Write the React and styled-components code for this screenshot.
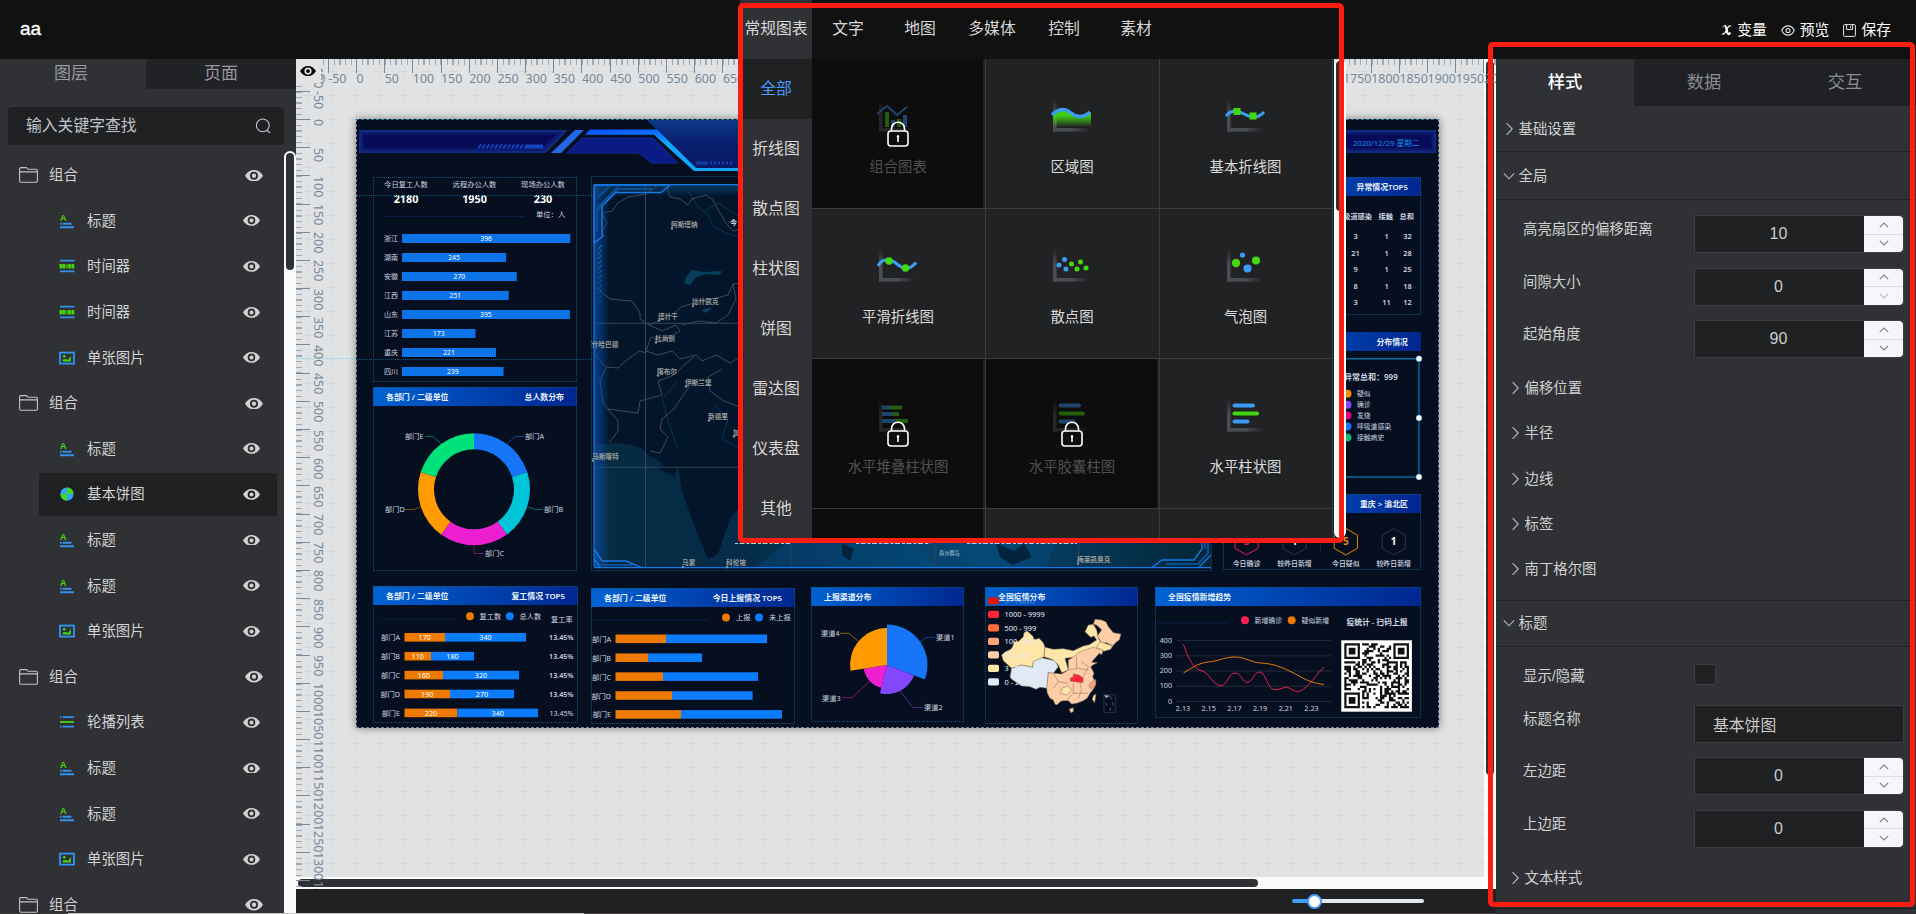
import React from "react";
import styled, { createGlobalStyle, css } from "styled-components";

const Global = createGlobalStyle`
  * { box-sizing: border-box; }
  body {
    margin: 0;
    background: #303134;
    font-family: "Liberation Sans", "Noto Sans CJK SC", sans-serif;
    color: #d0d1d3;
    overflow: hidden;
  }
`;

/* ---------- shell ---------- */
const Page = styled.div`
  position: relative;
  width: 1916px;
  height: 914px;
  display: flex;
  flex-direction: column;
  overflow: hidden;
`;
const Header = styled.header`
  flex: 0 0 59px;
  background: #111;
  display: flex;
  justify-content: space-between;
  padding: 0 25px 0 20px;
`;
const ProjectName = styled.div`
  font-size: 19px;
  font-weight: 500;
  color: #fff;
  line-height: 58px;
  -webkit-text-stroke: 0.35px #fff;
`;
const Actions = styled.div`
  display: flex;
  align-items: center;
  gap: 14px;
  padding-top: 1px;
`;
const Action = styled.div`
  display: flex;
  align-items: center;
  gap: 5px;
  color: #fff;
  font-size: 14.8px;
  line-height: 20px;
`;
const Body = styled.div`
  flex: 1;
  display: flex;
  min-height: 0;
`;

/* ---------- left panel ---------- */
const LeftPanel = styled.aside`
  flex: 0 0 296px;
  background: #303134;
  display: flex;
  flex-direction: column;
`;
const LayerTabs = styled.div`
  display: flex;
  flex: 0 0 30px;
`;
const LayerTab = styled.div`
  flex: 0 0 ${(p) => p.$w}px;
  background: ${(p) => (p.$active ? "#303134" : "#212226")};
  color: #96989d;
  font-size: 17px;
  line-height: 30px;
  text-align: center;
  padding-right: ${(p) => (p.$active ? 4 : 0)}px;
`;
const Search = styled.div`
  flex: 0 0 38px;
  margin: 18px 12px 6px 8px;
  padding: 0 13px 0 18px;
  border-radius: 4px;
  background: #202122;
  color: #c0c4cc;
  font-size: 15.8px;
  line-height: 36px;
  display: flex;
  justify-content: space-between;
  align-items: center;
`;
const ListArea = styled.div`
  flex: 1;
  min-height: 0;
  display: flex;
  overflow: hidden;
`;
const LayerList = styled.div`
  flex: 0 0 284px;
  padding-top: 2.8px;
`;
const LayerRow = styled.div`
  height: 43px;
  margin: ${(p) => (p.$group ? "0 7px 2.6px 13px" : "0 7px 2.6px 39px")};
  padding: ${(p) => (p.$group ? "0 14px 0 6px" : "0 17px 0 20px")};
  background: ${(p) => (p.$selected ? "#202123" : "transparent")};
  display: flex;
  align-items: center;
`;
const LayerIcon = styled.span`
  display: flex;
  width: ${(p) => (p.$group ? 30 : 28)}px;
`;
const LayerName = styled.span`
  flex: 1;
  font-size: 14.4px;
  line-height: 20px;
  color: #d3d3d3;
`;
const VScroll = styled.div`
  flex: 0 0 12px;
  background: #fafafa;
  border-radius: ${(p) => (p.$round ? "6px" : "6px 6px 0 0")};
  padding: 2px;
`;
const VThumb = styled.div`
  height: ${(p) => p.$h}px;
  border-radius: 4px;
  background: #303134;
`;

/* ---------- stage ---------- */
const Center = styled.main`
  flex: 0 0 1200px;
  display: flex;
  flex-direction: column;
`;
const Stage = styled.div`
  position: relative;
  flex: 0 0 830px;
  display: flex;
  flex-direction: column;
  background: #fff;
  overflow: hidden;
`;
const StageTop = styled.div`
  flex: 0 0 818px;
  display: flex;
`;
const Canvas = styled.div`
  position: relative;
  flex: 0 0 1188px;
  overflow: hidden;
  background-color: #e1e2e4;
  background-image: url("data:image/svg+xml,%3Csvg xmlns='http://www.w3.org/2000/svg' width='24' height='24'%3E%3Cpath d='M7 12.5H17M12.5 7.5V17' stroke='%23d6d7da'/%3E%3C/svg%3E");
  background-size: 24px 24px;
`;
const HScroll = styled.div`
  flex: 0 0 12px;
  width: 1188px;
  background: #fafafa;
  border-radius: 6px;
  padding: 2px;
`;
const HThumb = styled.div`
  width: 960px;
  height: 8px;
  border-radius: 4px;
  background: #303134;
`;
const RulerX = styled.div`
  position: absolute;
  left: 3.6px;
  top: 0;
  height: 30px;
  display: flex;
`;
const RulerY = styled.div`
  position: absolute;
  left: 0;
  top: 3.6px;
  width: 30px;
  display: flex;
  flex-direction: column;
`;
const tick = "#778a9b";
const minor = "#9eaab6";
const CellX = styled.div`
  flex: 0 0 28.2px;
  min-width: 0;
  height: 30px;
  padding: 12px 0 0 0.5px;
  font: 12.4px/16px "Noto Sans", sans-serif;
  color: #778898;
  white-space: nowrap;
  background:
    linear-gradient(${tick}, ${tick}) 0 0 / 1.2px 14px no-repeat,
    repeating-linear-gradient(90deg, ${minor} 0 1.5px, transparent 1.5px 5.64px) 0 0 / 100% 6px no-repeat;
`;
const CellY = styled.div`
  flex: 0 0 28.2px;
  min-height: 0;
  width: 30px;
  display: flex;
  align-items: flex-start;
  padding: 0.5px 0 0 14px;
  font: 12.4px/16px "Noto Sans", sans-serif;
  color: #778898;
  white-space: nowrap;
  background:
    linear-gradient(${tick}, ${tick}) 0 0 / 14px 1.2px no-repeat,
    repeating-linear-gradient(180deg, ${minor} 0 1.5px, transparent 1.5px 5.64px) 0 0 / 6px 100% no-repeat;
  span { writing-mode: vertical-rl; }
`;
const RulerCorner = styled.div`
  position: absolute;
  left: 0;
  top: 0;
  width: 25px;
  height: 24px;
  background: #e3e3e4;
  display: flex;
  align-items: center;
  justify-content: center;
  padding-right: 1px;
`;
const Guide = styled.div`
  position: absolute;
  left: ${(p) => p.$x}px;
  top: ${(p) => p.$y}px;
  width: ${(p) => p.$w}px;
  border-top: 1px dotted ${(p) => p.$c || "#0f5677"};
`;
const BottomBar = styled.div`
  flex: 0 0 24px;
  background: #202122;
  display: flex;
  justify-content: flex-end;
  align-items: center;
  padding-right: 72px;
`;
const SliderTrack = styled.div`
  width: 132px;
  height: 4px;
  border-radius: 2px;
  background: linear-gradient(90deg, #409eff 22px, #e4e7ed 22px);
  display: flex;
  align-items: center;
  padding-left: 15px;
`;
const SliderKnob = styled.div`
  width: 15px;
  height: 15px;
  border-radius: 50%;
  background: #fff;
  border: 2px solid #409eff;
`;
const StatusLine = styled.div`
  position: absolute;
  left: 0;
  bottom: 0;
  width: 1496px;
  height: 1px;
  background: linear-gradient(90deg, #3a3a3d 68px, #c9c7c9 68px 584px, #4a464a 584px);
`;

/* ---------- dashboard on the canvas ---------- */
const Board = styled.div`
  position: absolute;
  left: 60px;
  top: 60px;
  width: 1083px;
  height: 609px;
  background: #050f20;
  box-shadow: 0 0 8px rgba(0, 0, 0, 0.45);
  border: 1px dashed #73818c;
  border-top-color: #2b7894;
  font-family: "Noto Sans", "Noto Sans CJK SC", sans-serif;
  overflow: hidden;
`;
const Widget = styled.section`
  position: absolute;
  left: ${(p) => p.$x - 1}px;
  top: ${(p) => p.$y - 1}px;
  width: ${(p) => p.$w}px;
  height: ${(p) => p.$h}px;
  overflow: hidden;
  svg { position: absolute; left: 0; top: 0; }
  &::after {
    content: "";
    position: absolute;
    inset: 0;
    border: ${(p) => (p.$plain ? "none" : "1px dotted #125279")};
  }
`;
const WidgetHead = styled.div`
  height: 19px;
  display: flex;
  justify-content: space-between;
  align-items: center;
  padding: 0 13px;
  background: linear-gradient(90deg, #0062d2, #00268f);
  color: #e9f2fb;
  font-size: 7.9px;
  font-weight: 600;
  line-height: 18px;
  white-space: nowrap;
`;

function Text({ x, y, s = 7.2, c = "#cfd8e2", a = "start", w = 400, children }) {
  return (
    <text x={x} y={y} fontSize={s} fill={c} textAnchor={a} fontWeight={w} dominantBaseline="central">
      {children}
    </text>
  );
}
function Panel({ x, y, w, h, left, right, children, plain }) {
  return (
    <Widget $x={x} $y={y} $w={w} $h={h} $plain={plain}>
      {(left || right) && (
        <WidgetHead>
          <span>{left}</span>
          <span>{right}</span>
        </WidgetHead>
      )}
      <svg width={w} height={h} viewBox={`${x} ${y} ${w} ${h}`}>{children}</svg>
    </Widget>
  );
}

const polar = (cx, cy, r, deg) => {
  const t = ((deg - 90) * Math.PI) / 180;
  return `${(cx + r * Math.cos(t)).toFixed(2)} ${(cy + r * Math.sin(t)).toFixed(2)}`;
};
const slice = (cx, cy, r, r0, a, b) =>
  `M${polar(cx, cy, r, a)}A${r} ${r} 0 ${b - a > 180 ? 1 : 0} 1 ${polar(cx, cy, r, b)}L${polar(cx, cy, r0, b)}` +
  (r0 ? `A${r0} ${r0} 0 0 0 ${polar(cx, cy, r0, a)}Z` : "Z");

const provinces = [["浙江", 396], ["湖南", 245], ["安徽", 270], ["江西", 251], ["山东", 395], ["江苏", 173], ["重庆", 221], ["四川", 239]];
const returned = [
  ["部门A", 170, 340, 89, 170], ["部门B", 110, 180, 75, 118], ["部门C", 160, 320, 87, 163],
  ["部门D", 190, 270, 94, 158], ["部门E", 220, 340, 101.5, 182],
];
const reported = [["部门A", 310, 411], ["部门B", 292, 346], ["部门C", 307, 402], ["部门D", 316, 396.6], ["部门E", 325, 426]];

function HeaderArt() {
  return (
    <Widget $x={1} $y={1} $w={1081} $h={57} $plain>
      <svg width="1081" height="57" viewBox="1 1 1081 57">
        <defs>
          <linearGradient id="edge" x1="0" y1="0" x2="1" y2="1">
            <stop offset="0" stopColor="#0a48ff" /><stop offset=".25" stopColor="#10a8ff" />
          </linearGradient>
          <linearGradient id="mid" x1="0" y1="0" x2="0" y2="1">
            <stop offset="0" stopColor="#0c3a8a" /><stop offset=".5" stopColor="#081f6e" /><stop offset="1" stopColor="#081a66" />
          </linearGradient>
        </defs>
        <path d="M290 0H792L743 50H340Z" fill="url(#mid)" />
        <path d="M3 11H212L190 34H3Z" fill="#12297f" />
        <path d="M5 13H207L188 32H5Z" fill="#0b1c6e" />
        <path d="M7.5 15.5H201L185.5 29.5H7.5Z" fill="#070b58" />
        <path d="M219 11H228L205 34H195Z" fill="#2468e8" />
        <path d="M226 19H297L322 44H296L283 34H211Z" fill="#0b1a85" stroke="#10299b" />
        <path d="M234 10.5H301L340 49H740V52H338L298 15.7H229Z" fill="url(#edge)" />
        <g stroke="#1546c0" strokeWidth="2">
          {Array.from({ length: 12 }, (_, i) => <path key={i} d={`M${122 + i * 4.2} 29.5L${125 + i * 4.2} 25.5`} />)}
          <path d="M170 27.5H187" strokeWidth="4" />
          <path d="M340 44H352M354 44h2m2 0h2m2 0h2m2 0h2m2 0h2m2 0h2" strokeWidth="3" opacity=".8" />
        </g>
        <path d="M860 11H1080V34H840Z" fill="#12297f" />
        <path d="M860 13H1078V32H840Z" fill="#0b1c6e" />
        <path d="M860 15.5H1075.5V29.5H840Z" fill="#070b58" />
        <Text x={997} y={23.5} s={7.8} c="#0a92e8">2020/12/29 星期二</Text>
      </svg>
    </Widget>
  );
}

const cities = [
  [315, 105, "阿斯塔纳"], [336, 182.6, "比什凯克"], [302, 197, "塔什干"], [299, 219, "杜尚别"], [229, 225, "阿什哈巴德"],
  [301, 252, "喀布尔"], [329, 263, "伊斯兰堡"], [352, 297, "新德里"], [377, 313, "加德满都"], [236, 337, "马斯喀特"],
  [326, 443.5, "马累"], [370, 443.5, "科伦坡"], [721, 440, "梅莱凯奥克"],
];

function MapWidget() {
  return (
    <Panel x={235} y={57} w={621} h={395}>
      <defs>
        <linearGradient id="sea" x1="0" y1="0" x2="1" y2="0">
          <stop offset="0" stopColor="#052b40" /><stop offset=".25" stopColor="#052c4a" /><stop offset=".6" stopColor="#064672" /><stop offset="1" stopColor="#042636" />
        </linearGradient>
        <linearGradient id="glow" x1="0" y1="0" x2="1" y2="0">
          <stop offset="0" stopColor="#0b4ea8" stopOpacity=".8" /><stop offset="1" stopColor="#0b4ea8" stopOpacity="0" />
        </linearGradient>
        <linearGradient id="glowTop" x1="0" y1="0" x2="0" y2="1">
          <stop offset="0" stopColor="#0b4e88" stopOpacity=".6" /><stop offset="1" stopColor="#0b4e88" stopOpacity="0" />
        </linearGradient>
      </defs>
      <rect x="238" y="66" width="617" height="382" fill="#02152a" />
      <path d="M238 326L262 324L284 328L292 336L306 344L308 347L300 348L318 358L322 346L326 372L340 412L352 440L362 435L374 400L386 385H855V448H238Z" fill="url(#sea)" />
      <path d="M430 424H560L580 448H400ZM600 424H700L690 448H620Z" fill="#07518a" opacity=".35" />
      <path d="M486 424l12 6-4 12-8-6zM640 424l18 8 10-8 8 14-20 8-12-8z" fill="#02152a" opacity=".7" />
      <g fill="none" stroke="#0b5670" strokeWidth=".8" opacity=".7">
        <path d="M332 72L342 88L352 96L358 108L372 115L384 118M349 92L362 84L384 98M322 330L314 308L306 280L322 262" />
        <path d="M358 285L372 300L366 320L384 330" />
      </g>
      <path d="M330 158L336 151L348 153L366 152L364 156L350 155L340 158L334 166L328 164ZM345 191L357 188L350 194Z" fill="#07405c" />
      <g fill="none" stroke="#5a6068" strokeWidth=".7">
        <path d="M311 68L314 78L324 80L332 86L336 80L350 76L356 80L370 104L377 112L384 110" />
        <path d="M300 68L290 75L272 78L262 84L256 92L246 94L251 104L246 112L248 118" />
        <path d="M237 166L254 180L276 182L284 194L284 200L293 206L302 202L316 196L325 188L338 184L356 180L372 176L377 165L384 164M293 206L306 212L320 206L324 212L306 222L295 218L290 232L302 236L316 232L324 240L340 236L346 242" />
        <path d="M237 234L250 248L262 249L272 240L283 232L290 234M250 248L244 262L247 284L252 290L282 294L284 282L306 276L302 262L318 256L328 246L338 238M252 290L262 302L262 312L253 324" />
        <path d="M338 262L330 272L318 290L306 300L304 310L312 318L304 334L294 332M366 250L352 258L354 272L368 282L384 288M346 242L360 236L374 244L384 238M377 165L380 180L372 196L360 204L342 202L326 206" />
      </g>
      <g stroke="#34465a" strokeWidth="1">
        <path d="M289.5 66V448M434.7 66V448M578.7 66V448M722.7 66V448M238 204.3H855M238 348.3H855" />
      </g>
      <rect x="238" y="66" width="16" height="382" fill="url(#glow)" />
      <rect x="238" y="66" width="617" height="12" fill="url(#glowTop)" />
      <g fill="none" stroke="#0c4e91" strokeWidth="2.2">
        <path d="M240 80L254 67M240 90L262 68M241 112V92L262 70H296M238 434L244 446H276M852 424V434L842 445H810M849 424V430" />
      </g>
      <g fill="none" stroke="#1778e6" strokeWidth="1.4">
        <path d="M237.8 66H314L305 73.5H260L246 87V118L238 124V66" />
        <path d="M238 430L246 442H270L285 448.4M238 440L244 448.4M846 424V430L838 441H806L796 448.4M855 436L843 448" />
        <path d="M238 448.6H855M238 65.6H855M238 66V448" strokeWidth="1.2" />
      </g>
      <g stroke="#1466ad" strokeWidth="1.3">
        {Array.from({ length: 12 }, (_, i) => <path key={i} d={`M242 ${130 + i * 5}l4 -4`} opacity={1 - i * 0.06} />)}
      </g>
      {cities.map(([x, y, n]) => (
        <g key={n}>
          <circle cx={x + 1} cy={y + 4.5} r="1.2" fill="#8f8f8f" />
          <Text x={x} y={y} s={6.7} w={600} c="#9b9c9a">{n}</Text>
        </g>
      ))}
      <Text x={583} y={433.7} s={5.2} c="#c8d2d8">南沙群岛</Text>
      <Text x={374} y={103.5} s={7} w={600}>今</Text>
      <path d="M379 424.5H434M500 424.5H574M611 424.5H721" stroke="#b8cfe2" strokeDasharray="3 1.5 5 2" />
    </Panel>
  );
}

const chinaRegions = [
  ["#ffe5a8", "785,375 795,366 812,358 818,350 822,335 836,334 850,320 852,308 862,303 880,320 882,330 897,325 910,338 915,352 912,380 880,398 878,412 845,405 815,415 798,400 790,392"],
  ["#e0e9f4", "815,415 845,405 878,412 880,395 905,383 925,388 945,392 955,410 940,430 925,428 922,475 900,472 888,478 870,470 845,468 830,458 815,448 810,440"],
  ["#ffe5a8", "915,352 940,358 970,356 1000,362 1030,348 1048,344 1070,330 1062,318 1052,322 1035,305 1045,285 1060,283 1070,300 1075,325 1085,340 1110,345 1090,360 1060,360 1020,378 1000,382 975,385 985,420 965,428 955,405 940,390 912,380"],
  ["#ffcda6", "1060,283 1065,268 1085,270 1098,276 1105,290 1120,308 1143,312 1138,330 1130,335 1118,348 1100,338 1085,340 1072,318 1085,300 1070,285"],
  ["#ffe5a8", "1080,335 1118,348 1112,358 1092,364 1070,352"],
  ["#ffcda6", "1035,360 1060,352 1090,360 1085,374 1078,370 1060,390 1055,397 1072,398 1060,404 1052,410 1062,430 1058,440 1068,460 1062,475 1050,490 1042,504 1030,512 1010,520 995,522 985,512 970,512 960,515 952,524 945,523 940,510 930,505 922,490 920,475 925,428 945,430 965,432 985,420 985,390 1005,378 1015,368"],
  ["#ffe5a8", "965,475 985,468 995,482 980,495 962,490"],
  ["#ffa478", "1050,460 1068,448 1066,466 1056,476 1047,470"],
  ["#ff2438", "990,445 1000,440 1000,431 1018,436 1030,444 1028,458 1010,456 992,454"],
  ["#ffe5a8", "1060,497 1068,492 1064,518 1057,508"],
  ["#ffcda6", "988,537 1000,533 1000,545 992,548"],
];
const legend = [["#dd1b0a", "≥ 10000"], ["#ff2438", "1000 - 9999"], ["#ff6b3d", "500 - 999"], ["#ffa478", "100 - 499"], ["#ffcda6", "10 - 99"], ["#ffe5a8", "3 - 9"], ["#e0eaf5", "0 - 2"]];

const qrCells = (() => {
  const n = 29;
  const out = [];
  let s = 77;
  const inFinder = (r, c) => (r < 8 && c < 8) || (r < 8 && c > n - 9) || (r > n - 9 && c < 8);
  for (let r = 0; r < n; r++)
    for (let c = 0; c < n; c++) {
      s = (s * 1103515245 + 12345) % 2147483648;
      if (!inFinder(r, c) && s / 2147483648 > 0.48) out.push(`M${c} ${r}h1v1h-1z`);
    }
  return out.join("");
})();
const Finder = ({ x, y }) => (
  <g transform={`translate(${x} ${y})`}>
    <path d="M.5 .5H6.5V6.5H.5Z" fill="none" stroke="#111" />
    <path d="M2 2H5V5H2Z" fill="#111" />
  </g>
);
const Hex = ({ x, c, n, t }) => (
  <g>
    <path d={`M${x} 409.5l11.6 6.6v13.2l-11.6 6.6l-11.6 -6.6v-13.2z`} fill="none" stroke={c} />
    <Text x={x} y={422.3} s={10} w={700} c={c === "#2c3846" ? "#fff" : c} a="middle">{n}</Text>
    <Text x={x} y={444.5} s={6.9} w={500} a="middle">{t}</Text>
  </g>
);

function Dashboard() {
  return (
    <Board>
      <HeaderArt />
      <Panel x={17} y={58} w={204} h={205}>
        {[["今日复工人数", 50, 2180], ["远程办公人数", 118.5, 1950], ["现场办公人数", 187, 230]].map(([t, x, n]) => (
          <g key={t}>
            <Text x={x} y={65} s={7.3} a="middle">{t}</Text>
            <Text x={x} y={79} s={10.8} w={700} c="#fff" a="middle">{n}</Text>
          </g>
        ))}
        <Text x={180} y={95} s={7.3}>单位：人</Text>
        <path d="M28 97.5H168" stroke="#0a2045" />
        {provinces.map(([n, v], i) => (
          <g key={n}>
            <Text x={28} y={119.3 + i * 19} s={7}>{n}</Text>
            <rect x="46" y={115 + i * 19} width={v * 0.425} height="9" fill="#0c73e8" />
            <Text x={46 + v * 0.2125} y={119 + i * 19} s={6.8} c="#fff" a="middle">{v}</Text>
          </g>
        ))}
      </Panel>
      <Panel x={17} y={268} w={204} h={184} left="各部门 / 二级单位" right="总人数分布">
        {["#1775fa", "#00c5d8", "#ed1fd1", "#ff9b00", "#00e17a"].map((c, i) => (
          <path key={c} d={slice(118, 370.3, 56, 40, i * 72, i * 72 + 72)} fill={c} />
        ))}
        <g fill="none" strokeWidth=".8">
          <path d="M151 325L159 317.5H168" stroke="#1d4fa0" /><path d="M172 388L179 390.5H187" stroke="#0a7c8a" />
          <path d="M118 427V434.5H128" stroke="#8c1a85" /><path d="M64 388L58 390.5H49" stroke="#9a6208" />
          <path d="M85 325L77 317.5H69" stroke="#0a8a55" />
        </g>
        <Text x={169} y={317}>部门A</Text><Text x={188} y={389.5}>部门B</Text><Text x={129} y={434}>部门C</Text>
        <Text x={29} y={389.5}>部门D</Text><Text x={49} y={317}>部门E</Text>
      </Panel>
      <MapWidget />
      <Guide $x={0} $y={75} $w={235} />
      <Guide $x={0} $y={239} $w={235} />
      <Panel x={17} y={467} w={205} h={137} left="各部门 / 二级单位" right="复工情况 TOP5">
        <path d="M24 500H99" stroke="#0a2045" />
        <circle cx="114" cy="497.3" r="4" fill="#ef7a00" /><Text x={123.5} y={497}>复工数</Text>
        <circle cx="153.8" cy="497.3" r="4" fill="#0c7cff" /><Text x={163.5} y={497}>总人数</Text>
        <Text x={195} y={499.5}>复工率</Text>
        {returned.map(([n, a, b, xa, xb], i) => {
          const y = 518.3 + i * 18.9;
          return (
            <g key={n}>
              <Text x={44} y={y} a="end">{n}</Text>
              <rect x="48.5" y={y - 4.3} width={xa - 48.5} height="8.6" fill="#ef7a00" />
              <rect x={xa} y={y - 4.3} width={xb - xa} height="8.6" fill="#0c7cff" />
              <Text x={(48.5 + xa) / 2} y={y - 0.3} c="#fff" a="middle">{a}</Text>
              <Text x={(xa + xb) / 2} y={y - 0.3} c="#fff" a="middle">{b}</Text>
              <Text x={217.5} y={y} s={7.1} w={i < 4 ? 600 : 400} a="end">13.45%</Text>
            </g>
          );
        })}
      </Panel>
      <Panel x={235} y={469} w={204} h={136} left="各部门 / 二级单位" right="今日上报情况 TOP5">
        <path d="M237 501H352" stroke="#0a2045" />
        <circle cx="370" cy="498.5" r="4" fill="#ef7a00" /><Text x={380} y={498}>上报</Text>
        <circle cx="403" cy="498.5" r="4" fill="#0c7cff" /><Text x={413} y={498}>未上报</Text>
        {reported.map(([n, xa, xb], i) => {
          const y = 519.8 + i * 18.9;
          return (
            <g key={n}>
              <Text x={255} y={y} a="end">{n}</Text>
              <rect x="259.5" y={y - 4.3} width={xa - 259.5} height="8.6" fill="#ef7a00" />
              <rect x={xa} y={y - 4.3} width={xb - xa} height="8.6" fill="#0c7cff" />
            </g>
          );
        })}
      </Panel>
      <Panel x={455} y={468} w={153} h={135} left="上报渠道分布">
        <path d={slice(531, 546, 40.5, 0, 0, 111)} fill="#1775fa" />
        <path d={slice(531, 546, 29, 0, 111, 194)} fill="#8546ff" />
        <path d={slice(531, 546, 23.5, 0, 194, 261)} fill="#ed1fd1" />
        <path d={slice(531, 546, 37, 0, 261, 360)} fill="#ff9b00" />
        <g fill="none" strokeWidth=".8">
          <path d="M564 523L570 518.3H579" stroke="#1d4fa0" /><path d="M544 572L557 588.5H567" stroke="#5b35a8" />
          <path d="M514 562L496 578.7H486" stroke="#a01a90" /><path d="M502 522L493 514.3H484" stroke="#b07010" />
        </g>
        <Text x={580} y={518}>渠道1</Text><Text x={568} y={588}>渠道2</Text>
        <Text x={466} y={578.5}>渠道3</Text><Text x={465} y={514}>渠道4</Text>
      </Panel>
      <Panel x={629} y={468} w={153} h={137} left="全国疫情分布">
        <g transform="translate(384 411) scale(.33333)">
          {chinaRegions.map(([c, pts], i) => <polygon key={i} points={pts} fill={c} stroke="#7e6f60" strokeWidth="1.6" strokeLinejoin="round" />)}
          <path d="M940 430L955 455L940 475M955 455L985 460M1000 460V490L980 510M1020 458L1025 480L1015 505M1000 490H1045M1025 395L1045 410L1030 440M985 420L1015 415L1045 420M1010 380V415" stroke="#7e6f60" strokeWidth="1.6" fill="none" />
          <path d="M1092 494H1127V547H1092Z" fill="none" stroke="#2d3846" strokeWidth="2.5" />
          <path d="M1094 496l14 2-10 5zM1112 500l2 8M1098 520l2 7M1118 518l2 8M1112 534l-2 8" stroke="#7c8794" strokeWidth="2" fill="#cfd8e2" />
        </g>
        {legend.map(([c, t], i) => (
          <g key={t}>
            <rect x="632" y={478.2 + i * 13.5} width="11" height="7.4" rx="1.8" fill={c} />
            <Text x={648.6} y={481.6 + i * 13.5} s={7.4} c={i ? "#e8edf2" : "#4f8cd8"}>{t}</Text>
          </g>
        ))}
      </Panel>
      <Panel x={799} y={468} w={266} h={131} left="全国疫情新增趋势">
        <path d="M801 504H873" stroke="#0a2045" />
        <circle cx="889" cy="501.3" r="4" fill="#ff1f51" /><Text x={898.5} y={501} s={6.9}>新增确诊</Text>
        <circle cx="935.7" cy="501.3" r="4" fill="#ef7a00" /><Text x={945.5} y={501} s={6.9}>疑似新增</Text>
        <Text x={1021} y={503} s={7.8} w={600} a="middle">疫统计 - 扫码上报</Text>
        {[400, 300, 200, 100, 0].map((v, i) => (
          <g key={v}>
            <Text x={816} y={520.8 + i * 15.2} a="end">{v}</Text>
            <path d={`M821 ${521.6 + i * 15.2}H975`} stroke="#232c38" />
          </g>
        ))}
        {["2.13", "2.15", "2.17", "2.19", "2.21", "2.23"].map((v, i) => <Text key={v} x={827 + i * 25.7} y={589} a="middle">{v}</Text>)}
        <path d="M827.5 525.4C832 540 838 549 843.5 551C854 553 856 566 865 566.8C871 566 873 554 879 554C885 554 887 563.5 891 563.5C897 563 898 553 903.5 553C910 553 911 570 918 570.5C926 571 928 567 932 568.5C938 571 939 573.5 943 572.5C953 569 961 554 968 548" fill="none" stroke="#f01e50" />
        <path d="M827.5 554C834 550 842 544 852 543C862 542.5 868 538 879 538C889 538 895 543.5 905 544C920 544.5 932 551 944 557.5C954 563 960 564.5 968 565.5" fill="none" stroke="#ea7a05" />
        <rect x="985.3" y="521.3" width="70.6" height="71.4" fill="#fff" />
        <g transform="translate(988.3 524.3) scale(2.23 2.24)">
          <path d={qrCells} fill="#111" />
          <Finder x={0} y={0} /><Finder x={22} y={0} /><Finder x={0} y={22} />
        </g>
      </Panel>
      <Panel x={867} y={58} w={198} h={138} right="异常情况TOP5" left=" ">
        <Text x={1016} y={96.6} w={600} a="end">呼吸道感染</Text>
        <Text x={1022.5} y={96.6} w={600}>接触</Text>
        <Text x={1043.5} y={96.6} w={600}>总和</Text>
        {[[3, 1, 32], [21, 1, 28], [9, 1, 25], [8, 1, 18], [3, 11, 12]].map((r, i) => (
          <g key={i}>
            {r.map((v, j) => <Text key={j} x={[999.5, 1030.5, 1051.5][j]} y={117.3 + i * 16.5} s={7.4} w={600} a="middle">{v}</Text>)}
          </g>
        ))}
      </Panel>
      <Panel x={867} y={213} w={198} h={149} right="分布情况" left=" " plain>
        <path d="M867 239.7H1063V358H867" fill="none" stroke="#0b6a9e" strokeWidth="1.4" />
        <Text x={988} y={257.7} s={8} w={600}>异常总和：999</Text>
        {[["#f09000", "疑似"], ["#8546ff", "确诊"], ["#e6007e", "发烧"], ["#1775fa", "呼吸道感染"], ["#19b568", "接触病史"]].map(([c, t], i) => (
          <g key={t}>
            <circle cx="991.5" cy={274.8 + i * 10.9} r="4" fill={c} />
            <Text x={1001} y={274.5 + i * 10.9} s={6.8}>{t}</Text>
          </g>
        ))}
      </Panel>
      <Panel x={1058} y={234} w={12} h={130} plain>
        <g fill="#fff" stroke="#0b6a9e" strokeWidth=".4"><circle cx="1063" cy="239.7" r="3" /><circle cx="1063" cy="299" r="3" /><circle cx="1063" cy="358" r="3" /></g>
      </Panel>
      <Panel x={867} y={375} w={198} h={76} right="重庆 > 渝北区" left=" ">
        <Hex x={890.5} c="#e01c5a" n="3" t="今日确诊" /><Hex x={938.5} c="#2c3846" n="1" t="较昨日新增" />
        <path d="M964.5 410V434" stroke="#16273c" />
        <Hex x={989.8} c="#e88406" n="5" t="今日疑似" /><Hex x={1037.7} c="#2c3846" n="1" t="较昨日新增" />
      </Panel>
    </Board>
  );
}

/* ---------- component picker ---------- */
const Picker = styled.div`
  position: absolute;
  left: 740px;
  top: 0;
  width: 606px;
  height: 538px;
  display: flex;
  flex-direction: column;
  overflow: hidden;
`;
const PickerTabs = styled.div`
  flex: 0 0 59px;
  display: flex;
  background: #111;
`;
const PickerTab = styled.div`
  flex: 0 0 72px;
  text-align: center;
  font-size: 15.8px;
  line-height: 58px;
  color: #d8d8d8;
  background: ${(p) => (p.$active ? "#303134" : "transparent")};
`;
const PickerBody = styled.div`
  flex: 1;
  min-height: 0;
  display: flex;
`;
const Categories = styled.div`
  flex: 0 0 72px;
  background: #303134;
`;
const Category = styled.div`
  height: 60px;
  line-height: 60px;
  text-align: center;
  font-size: 15.8px;
  color: ${(p) => (p.$active ? "#4a9cff" : "#d8d8d8")};
  background: ${(p) => (p.$active ? "#202123" : "transparent")};
`;
const ChartGrid = styled.div`
  flex: 0 0 522px;
  display: grid;
  grid-template-columns: 174px 174px 173px;
  grid-auto-rows: 150px;
  background: #212224;
`;
const ChartCell = styled.div`
  position: relative;
  border-right: 1px solid #3b3b3e;
  border-bottom: 1px solid #3b3b3e;
  display: flex;
  flex-direction: column;
  align-items: center;
  padding: 40px 1px 0 0;
  color: ${(p) => (p.$locked ? "#505050" : "#dcdcdc")};
  font-size: 14.4px;
  line-height: 20px;
  ${(p) => p.$locked && css`
    background: linear-gradient(90deg, #0d0d0d 171px, #212224 171px);
    & > svg:first-child { opacity: 0.4; }
  `}
`;
const ChartLabel = styled.div`
  margin-top: 24px;
`;
const LockBadge = styled.div`
  position: absolute;
  left: 74.5px;
  top: 62px;
  display: flex;
`;

const B = "#3b9cf5";
const G = "#44d80f";
const chartMarks = {
  combo: <><path d="M0 15L10 7L20 16L30 8" stroke={B} strokeWidth="2" fill="none" /><path d="M10 13V28M22 20V28" stroke={G} strokeWidth="4" /><path d="M16 21V28M28 16V28" stroke={B} strokeWidth="4" /></>,
  area: <><path d="M2 16C8 9 14 9 20 14S32 19 40 13V27H2Z" fill="url(#greenFade)" /><path d="M1 16C8 9 14 9 20 14S32 19 39 13" stroke={B} strokeWidth="3.4" fill="none" /></>,
  line: <><path d="M1 17C6 11 12 11 18 14.5S32 21 39 13" stroke={B} strokeWidth="3" fill="none" /><path d="M8.5 9h7v7h-7zM24.5 13.5h7v7h-7z" fill={G} /></>,
  smooth: <><path d="M1 17C6 8 14 10 20 15S32 22 39 13.5" stroke={B} strokeWidth="3.2" fill="none" /><circle cx="12" cy="12" r="3.8" fill={G} /><circle cx="28.5" cy="19" r="3.8" fill={G} /></>,
  scatter: <><g fill={B}><circle cx="8" cy="16" r="2.5" /><circle cx="13.5" cy="10.5" r="2.5" /><circle cx="15" cy="20" r="2.5" /></g><g fill={G}><circle cx="20.5" cy="15" r="2.5" /><circle cx="26" cy="20" r="2.5" /><circle cx="29.5" cy="13" r="2.5" /><circle cx="35" cy="19" r="2.5" /></g></>,
  bubble: <><circle cx="17.5" cy="6" r="2.6" fill={B} /><circle cx="22.5" cy="19.5" r="4" fill={B} /><circle cx="11" cy="14" r="4.2" fill={G} /><circle cx="31" cy="11.5" r="4" fill={G} /></>,
  stack: <><path d="M5 8.5H13M5 15H16M5 22H18" stroke={B} strokeWidth="4" /><path d="M13 8.5H25M16 15H22M18 22H31" stroke={G} strokeWidth="4" /></>,
  bars: <><path d="M9.5 6.5H28M9.5 22.5H22.5" stroke={B} strokeWidth="4" strokeLinecap="round" /><path d="M9.5 14.5H32" stroke={G} strokeWidth="4" strokeLinecap="round" /></>,
};
const ChartIcon = ({ kind }) => (
  <svg width="42" height="34" viewBox="0 0 42 34">
    <defs>
      <linearGradient id="greenFade" x1="0" y1="0" x2="0" y2="1"><stop offset="0" stopColor={G} /><stop offset=".4" stopColor={G} stopOpacity=".9" /><stop offset="1" stopColor={G} stopOpacity=".1" /></linearGradient>
      <linearGradient id="axisV" x1="0" y1="0" x2="0" y2="1"><stop offset="0" stopColor="#4b4d54" stopOpacity="0" /><stop offset=".5" stopColor="#4b4d54" /></linearGradient>
      <linearGradient id="axisH" x1="0" y1="0" x2="1" y2="0"><stop offset=".5" stopColor="#4b4d54" /><stop offset="1" stopColor="#4b4d54" stopOpacity="0" /></linearGradient>
    </defs>
    <rect x="2" y="0" width="3.6" height="32.5" fill="url(#axisV)" />
    <rect x="2" y="29" width="36" height="3.6" fill="url(#axisH)" />
    {chartMarks[kind]}
  </svg>
);
const LockIcon = () => (
  <svg width="22" height="26" viewBox="0 0 22 26" fill="none" stroke="#fff" strokeWidth="1.6">
    <rect x="1" y="10" width="20" height="15" rx="3" />
    <path d="M4.5 10V8C4.5 -1 17.5 -1 17.5 8V10M11 14.5V21" />
    <circle cx="11" cy="15.5" r="1.2" fill="#fff" stroke="none" />
  </svg>
);
const charts = [
  ["组合图表", "combo", 1], ["区域图", "area"], ["基本折线图", "line"],
  ["平滑折线图", "smooth"], ["散点图", "scatter"], ["气泡图", "bubble"],
  ["水平堆叠柱状图", "stack", 1], ["水平胶囊柱图", "bars", 1], ["水平柱状图", "bars"],
  ["", null, 1], ["", null], ["", null],
];

const Highlight = styled.div`
  position: absolute;
  left: ${(p) => p.$x}px;
  top: ${(p) => p.$y}px;
  width: ${(p) => p.$w}px;
  height: ${(p) => p.$h}px;
  border: 5px solid #ff1d12;
  border-radius: 5px;
  pointer-events: none;
`;

/* ---------- right panel ---------- */
const RightPanel = styled.aside`
  flex: 0 0 420px;
  background: #303134;
  display: flex;
  flex-direction: column;
`;
const PropTabs = styled.div`
  display: grid;
  grid-template-columns: 138px 140px 142px;
  grid-template-rows: 47px;
  flex: 0 0 47px;
`;
const PropTab = styled.div`
  text-align: center;
  line-height: ${(p) => (p.$active ? 46 : 47)}px;
  font-size: 17.3px;
  font-weight: ${(p) => (p.$active ? 500 : 400)};
  color: ${(p) => (p.$active ? "#fff" : "#8b8d93")};
  background: ${(p) => (p.$active ? "#303134" : "#202124")};
`;
const SectionHead = styled.div`
  flex: 0 0 ${(p) => p.$h}px;
  display: flex;
  align-items: center;
  padding-left: 7px;
  border-bottom: 1px solid #202124;
  font-size: 14.4px;
  line-height: 20px;
`;
const SubHead = styled.div`
  flex: 0 0 45.2px;
  display: flex;
  align-items: center;
  padding-left: 13px;
  font-size: 14.4px;
  line-height: 20px;
`;
const ChevronSlot = styled.span`
  flex: 0 0 15.5px;
  display: flex;
  padding-left: ${(p) => (p.$dir === "right" ? 2 : 0)}px;
`;
const SubHeads = styled.div`
  display: flex;
  flex-direction: column;
  padding: 7.5px 0 8px;
  border-bottom: 1px solid #202124;
`;
const Form = styled.div`
  display: flex;
  flex-direction: column;
  gap: 14.6px;
  padding: ${(p) => p.$top}px 12px 0 27px;
`;
const Field = styled.div`
  display: flex;
  justify-content: space-between;
  align-items: flex-start;
  height: ${(p) => p.$h || 38}px;
  margin-bottom: ${(p) => (p.$h ? 5.4 : 0)}px;
`;
const FieldLabel = styled.label`
  padding-top: ${(p) => p.$top ?? 4}px;
  font-size: 14.4px;
  line-height: 20px;
`;
const Box = styled.div`
  width: 210px;
  height: 38px;
  border: 1px solid #3d3f43;
  background: #202123;
  display: flex;
  font-size: 16px;
  color: #ccc;
`;
const BoxText = styled.div`
  padding-left: 18px;
  line-height: 39px;
  font-size: 15.8px;
`;
const NumValue = styled.div`
  flex: 1;
  text-align: center;
  line-height: 36px;
  padding-right: 2px;
`;
const Stepper = styled.div`
  flex: 0 0 39px;
  display: flex;
  flex-direction: column;
  background: #f5f7fa;
  border-radius: 0 4px 4px 0;
`;
const Step = styled.div`
  flex: 1;
  display: flex;
  align-items: center;
  justify-content: center;
  & + & { border-top: 1px solid #dcdfe6; }
  svg { opacity: ${(p) => (p.$dim ? 0.5 : 1)}; }
`;
const Check = styled.div`
  width: 22px;
  height: 21px;
  margin-right: 188px;
  border: 1px solid #3d3f43;
  border-radius: 2px;
  background: #202123;
`;

const Chevron = ({ dir }) => (
  <ChevronSlot $dir={dir}>
    <svg width={dir === "right" ? 9 : 12} height="14" viewBox={dir === "right" ? "0 0 9 14" : "0 0 12 14"} fill="none" stroke="#b9babd" strokeWidth="1.1">
      {dir === "right" ? <path d="M1.6 1.2L7.2 7L1.6 12.8" /> : <path d="M.8 4.3L6 9.8L11.2 4.3" />}
    </svg>
  </ChevronSlot>
);
const StepArrow = ({ up }) => (
  <svg width="10" height="6" viewBox="0 0 10 6" fill="none" stroke="#7c7f85" strokeWidth="1.1">
    <path d={up ? "M.8 5.2L5 1L9.2 5.2" : "M.8 .8L5 5L9.2 .8"} />
  </svg>
);
function NumberField({ label, value, dim }) {
  return (
    <Field>
      <FieldLabel>{label}</FieldLabel>
      <Box>
        <NumValue>{value}</NumValue>
        <Stepper>
          <Step><StepArrow up /></Step>
          <Step $dim={dim}><StepArrow /></Step>
        </Stepper>
      </Box>
    </Field>
  );
}

/* ---------- small icons ---------- */
const Eye = ({ w = 18, fg = "#d2d2d2", bg = "#303134" }) => (
  <svg width={w} height={w * 0.64} viewBox="0 0 18 11.5">
    <path d="M0 5.75C2.2 2 5.4 0 9 0S15.8 2 18 5.75C15.8 9.5 12.6 11.5 9 11.5S2.2 9.5 0 5.75Z" fill={fg} />
    <circle cx="9" cy="5.75" r="3.1" fill="none" stroke={bg} strokeWidth="1.9" />
  </svg>
);
const Folder = () => (
  <svg width="19" height="16" viewBox="0 0 19 16" fill="none" stroke="#c4c4c4" strokeWidth="1.1">
    <path d="M.6 13.5V2C.6 1 1 .6 2 .6H7.5L9 2.3H17.4C18 2.3 18.4 2.7 18.4 3.4V14C18.4 14.8 18 15.2 17.2 15.2H2C1 15.2 .6 14.8 .6 13.8M.6 4.9H18.4" />
  </svg>
);
const itemIcons = {
  title: (
    <svg width="16" height="16" viewBox="0 0 16 16">
      <text x="1" y="8.4" fontSize="9" fontWeight="700" fill={G} fontFamily="Liberation Sans, sans-serif">A</text>
      <path d="M1 10.8H2.6M3.6 10.8H12.5M1 14.2H15" stroke="#3391ea" strokeWidth="1.9" />
    </svg>
  ),
  time: (
    <svg width="16" height="14" viewBox="0 0 16 14">
      <path d="M1 1.6H15.5M1 12.4H15.5" stroke="#3391ea" strokeWidth="1.9" />
      <path d="M1.8 5V9.4M4.8 5V9.4M10.6 5V9.4M13.9 5V9.4" stroke={G} strokeWidth="2.5" />
      <path d="M7.7 5.4V6.8M7.7 7.8V9.2" stroke={G} strokeWidth="1.6" />
      <path d="M1 7.2H15.4" stroke={G} strokeWidth="3" opacity=".4" />
    </svg>
  ),
  image: (
    <svg width="16" height="14" viewBox="0 0 16 14">
      <rect x="1" y="1.6" width="14" height="11" fill="none" stroke="#2f95f5" strokeWidth="1.8" />
      <path d="M3.8 10.5V8.5L7 8L9 9L11.8 5V10.5Z" fill={G} /><circle cx="5.2" cy="5.2" r="1.3" fill={G} />
    </svg>
  ),
  pie: (
    <svg width="16" height="14" viewBox="0 0 16 14">
      <circle cx="8" cy="7" r="6.6" fill="#34a2ff" />
      <path d="M8 7V.4A6.6 6.6 0 0 1 14.6 7ZM8 7V13.6A6.6 6.6 0 0 1 1.4 7Z" fill={G} />
    </svg>
  ),
  list: (
    <svg width="16" height="12" viewBox="0 0 16 12">
      <path d="M1 1.2H2.6M3.6 1.2H15M1 10.7H2.6M3.6 10.7H15" stroke="#3391ea" strokeWidth="1.8" />
      <path d="M1 6H15" stroke={G} strokeWidth="1.8" />
    </svg>
  ),
};
const layers = [
  ["g", "组合"], ["title", "标题"], ["time", "时间器"], ["time", "时间器"], ["image", "单张图片"],
  ["g", "组合"], ["title", "标题"], ["pie", "基本饼图", true], ["title", "标题"], ["title", "标题"], ["image", "单张图片"],
  ["g", "组合"], ["list", "轮播列表"], ["title", "标题"], ["title", "标题"], ["image", "单张图片"], ["g", "组合"],
];

const ticksX = Array.from({ length: 43 }, (_, i) => -100 + i * 50);
const ticksY = Array.from({ length: 30 }, (_, i) => -100 + i * 50);

export default function App() {
  return (
    <Page>
      <Global />
      <Header>
        <ProjectName>aa</ProjectName>
        <Actions>
          <Action>
            <svg width="11" height="12" viewBox="0 0 11 12" fill="none" stroke="#fff">
              <path d="M3.6 2C6 1.4 5.4 10.6 7.8 10C8.6 9.8 9 9.2 9.4 8.6" strokeWidth="2.2" />
              <path d="M9.8 2.2C8 1 6.4 4 5.6 6S2.6 11 1 9.8" strokeWidth="1.2" />
              <path d="M1.6 3.4C2.2 2.4 2.8 2 3.6 2" strokeWidth="1" />
            </svg>
            <span>变量</span>
          </Action>
          <Action>
            <svg width="14" height="11" viewBox="0 0 13 10" fill="none" stroke="#e6e6e6">
              <path d="M.7 5C2 2.2 4 .7 6.5 .7S11 2.2 12.3 5C11 7.8 9 9.3 6.5 9.3S2 7.8 .7 5Z" /><circle cx="6.5" cy="5" r="1.9" />
            </svg>
            <span>预览</span>
          </Action>
          <Action>
            <svg width="13" height="13" viewBox="0 0 13 13" fill="none" stroke="#e6e6e6">
              <path d="M1.6 .6H11.4C12 .6 12.4 1 12.4 1.6V11.4C12.4 12 12 12.4 11.4 12.4H1.6C1 12.4 .6 12 .6 11.4V1.6C.6 1 1 .6 1.6 .6ZM3.6 .6V5.4H9.6V.6M7.6 2V4" />
            </svg>
            <span>保存</span>
          </Action>
        </Actions>
      </Header>
      <Body>
        <LeftPanel>
          <LayerTabs>
            <LayerTab $w={146} $active>图层</LayerTab>
            <LayerTab $w={150}>页面</LayerTab>
          </LayerTabs>
          <Search>
            <span>输入关键字查找</span>
            <svg width="16" height="16" viewBox="0 0 16 16" fill="none" stroke="#c0c4cc" strokeWidth="1.1">
              <circle cx="7.8" cy="7.4" r="6.4" /><path d="M11.8 12L15 15" />
            </svg>
          </Search>
          <ListArea>
            <LayerList>
              {layers.map(([k, name, sel], i) => (
                <LayerRow key={i} $group={k === "g"} $selected={sel}>
                  <LayerIcon $group={k === "g"}>{k === "g" ? <Folder /> : itemIcons[k]}</LayerIcon>
                  <LayerName>{name}</LayerName>
                  <Eye w={k === "g" ? 18 : 17} bg={sel ? "#202123" : "#303134"} />
                </LayerRow>
              ))}
            </LayerList>
            <VScroll><VThumb $h={117} /></VScroll>
          </ListArea>
        </LeftPanel>
        <Center>
          <Stage>
            <StageTop>
              <Canvas>
                <Dashboard />
                <Guide $x={0} $y={299} $w={60} $c="#7ddbe8" />
              </Canvas>
              <VScroll $round><VThumb $h={714} /></VScroll>
            </StageTop>
            <HScroll><HThumb /></HScroll>
            <RulerX>{ticksX.map((t) => <CellX key={t}>{t}</CellX>)}</RulerX>
            <RulerY>{ticksY.map((t) => <CellY key={t}><span>{t}</span></CellY>)}</RulerY>
            <RulerCorner><Eye w={16} fg="#000" bg="#e3e3e4" /></RulerCorner>
          </Stage>
          <BottomBar><SliderTrack><SliderKnob /></SliderTrack></BottomBar>
        </Center>
        <RightPanel>
          <PropTabs>
            <PropTab $active>样式</PropTab>
            <PropTab>数据</PropTab>
            <PropTab>交互</PropTab>
          </PropTabs>
          <SectionHead $h={46}><Chevron dir="right" />基础设置</SectionHead>
          <SectionHead $h={48}><Chevron dir="down" />全局</SectionHead>
          <Form $top={15}>
            <NumberField label="高亮扇区的偏移距离" value="10" />
            <NumberField label="间隙大小" value="0" dim />
            <NumberField label="起始角度" value="90" />
          </Form>
          <SubHeads>
            {["偏移位置", "半径", "边线", "标签", "南丁格尔图"].map((t) => <SubHead key={t}><Chevron dir="right" />{t}</SubHead>)}
          </SubHeads>
          <SectionHead $h={46}><Chevron dir="down" />标题</SectionHead>
          <Form $top={17}>
            <Field $h={21}><FieldLabel $top={2}>显示/隐藏</FieldLabel><Check /></Field>
            <Field><FieldLabel>标题名称</FieldLabel><Box><BoxText>基本饼图</BoxText></Box></Field>
            <NumberField label="左边距" value="0" />
            <NumberField label="上边距" value="0" />
          </Form>
          <SubHeads><SubHead><Chevron dir="right" />文本样式</SubHead></SubHeads>
        </RightPanel>
      </Body>
      <StatusLine />
      <Picker>
        <PickerTabs>
          {["常规图表", "文字", "地图", "多媒体", "控制", "素材"].map((t, i) => <PickerTab key={t} $active={i === 0}>{t}</PickerTab>)}
        </PickerTabs>
        <PickerBody>
          <Categories>
            {["全部", "折线图", "散点图", "柱状图", "饼图", "雷达图", "仪表盘", "其他"].map((t, i) => <Category key={t} $active={i === 0}>{t}</Category>)}
          </Categories>
          <ChartGrid>
            {charts.map(([name, kind, locked], i) => (
              <ChartCell key={i} $locked={!!locked}>
                {kind && <ChartIcon kind={kind} />}
                {kind && <ChartLabel>{name}</ChartLabel>}
                {kind && locked && <LockBadge><LockIcon /></LockBadge>}
              </ChartCell>
            ))}
          </ChartGrid>
          <VScroll $round><VThumb $h={150} /></VScroll>
        </PickerBody>
      </Picker>
      <Highlight $x={738} $y={3} $w={606} $h={540} />
      <Highlight $x={1488} $y={42} $w={427} $h={865} />
    </Page>
  );
}
